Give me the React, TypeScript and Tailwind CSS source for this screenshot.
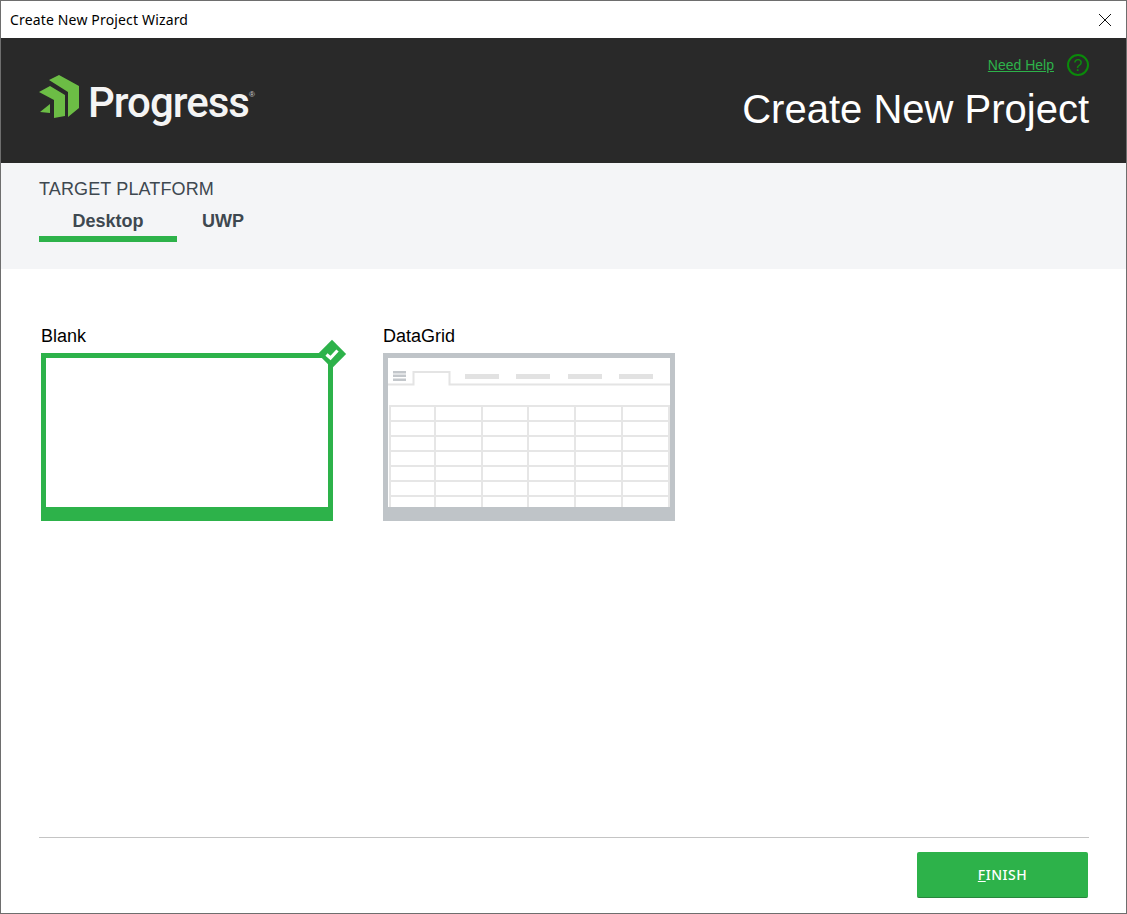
const green = '#2db24a'

function ProgressMark() {
  return (
    <svg width="42" height="46" viewBox="38 74 42 46" className="shrink-0">
      <polygon points="49,80 59,75 79,86 79,108 68,117 68,92" fill="#6cbd45" />
      <polygon points="39,92 50,86 65,95 65,116 54,118 54,100" fill="#6cbd45" />
      <polygon points="40,112 50,104 50,113" fill="#6cbd45" />
    </svg>
  )
}

function GridPreview() {
  const rows = [405, 420, 435, 450, 465, 480, 495]
  const cols = [389, 434, 481, 527, 574, 621, 668]
  const tabs = [465, 516, 568, 619]
  return (
    <svg width="292" height="168" viewBox="383 353 292 168" className="block">
      <rect x="383" y="353" width="292" height="168" fill="#bfc4c8" />
      <rect x="388" y="358" width="282" height="149" fill="#fff" />
      <rect x="393" y="371" width="13" height="2.500" fill="#c3c7cb" />
      <rect x="393" y="374.500" width="13" height="2.500" fill="#c3c7cb" />
      <rect x="393" y="378.500" width="13" height="2.500" fill="#c3c7cb" />
      <path d="M388 384.500H413.500V372H449.500V384.500H670" fill="none" stroke="#e4e4e4" strokeWidth="2" />
      {tabs.map((x) => (
        <rect key={x} x={x} y="374" width="34" height="5" fill="#e2e2e2" />
      ))}
      {rows.map((y) => (
        <rect key={y} x="389" y={y} width="280" height="2" fill="#e6e6e6" />
      ))}
      {cols.map((x) => (
        <rect key={x} x={x} y="405" width="2" height="102" fill="#e6e6e6" />
      ))}
    </svg>
  )
}

export default function App() {
  return (
    <div className="h-[914px] w-[1127px] flex flex-col bg-white border border-[#6e6e6e] font-['Liberation_Sans',sans-serif] overflow-hidden">
      {/* Title bar */}
      <div className="h-[37px] flex items-center justify-between pl-[9px] pr-[14px] shrink-0">
        <span className="text-[14px] text-black font-['Noto_Sans',sans-serif] tracking-[0.16px]">Create New Project Wizard</span>
        <svg width="14" height="14" viewBox="0 0 14 14">
          <path d="M1 1L13 13M13 1L1 13" stroke="#111" strokeWidth="1" fill="none" />
        </svg>
      </div>

      {/* Header */}
      <div className="h-[125px] bg-[#292929] flex justify-between pl-[37px] pr-[37px] shrink-0">
        <div className="flex items-start gap-[8px] pt-[36px]">
          <ProgressMark />
          <div className="flex items-start mt-[8px]">
            <span className="text-[42px] leading-none font-medium text-[#f4f4f4] font-['Roboto',sans-serif] tracking-[-1px]">Progress</span>
            <span className="text-[8px] text-[#cfcfcf] mt-[7px]">®</span>
          </div>
        </div>
        <div className="flex flex-col items-end pt-[15px]">
          <div className="flex items-center gap-[13px]">
            <a className="text-[14px] underline text-[#2db24a] mt-[2px]">Need Help</a>
            <svg width="22" height="22" viewBox="0 0 22 22">
              <circle cx="11" cy="11" r="10" fill="none" stroke="#0a8a0a" strokeWidth="2" />
              <text x="11" y="16.500" textAnchor="middle" fontSize="16" fill="#0a8a0a">?</text>
            </svg>
          </div>
          <h1 className="text-[40px] leading-none text-white mt-[13px]">Create New Project</h1>
        </div>
      </div>

      {/* Target platform */}
      <div className="h-[106px] bg-[#f4f5f7] pl-[38px] pt-[16px] shrink-0">
        <div className="text-[18px] leading-[20px] text-[#3e4850] tracking-[0.13px]">TARGET PLATFORM</div>
        <div className="flex mt-[7px] text-[#3e4850] font-bold text-[18px]">
          <div className="w-[138px] h-[36px] border-b-[6px] border-[#2db24a] flex justify-center pt-[5px] leading-[20px]">Desktop</div>
          <div className="pl-[25px] pt-[5px] leading-[20px]">UWP</div>
        </div>
      </div>

      {/* Templates */}
      <div className="flex-1 flex gap-[50px] pl-[40px] pt-[57px] text-black">
        <div>
          <div className="text-[18px] leading-[20px] mb-[7px]">Blank</div>
          <div className="relative w-[292px] h-[168px] border-[5px] border-b-[14px]" style={{ borderColor: green }}>
            <svg width="30" height="30" viewBox="0 0 30 30" className="absolute -top-[19px] -right-[19px]">
              <rect x="5" y="5" width="20" height="20" transform="rotate(45 15 15)" fill={green} />
              <path d="M9.500 15.500L13.500 19L20.500 11.500" fill="none" stroke="#fff" strokeWidth="3.200" />
            </svg>
          </div>
        </div>
        <div>
          <div className="text-[18px] leading-[20px] mb-[7px]">DataGrid</div>
          <GridPreview />
        </div>
      </div>

      {/* Footer */}
      <div className="ml-[38px] mr-[37px] h-[76px] border-t border-[#c4c4c4] flex justify-end items-start pt-[14px] pr-[1px] shrink-0">
        <button className="w-[171px] h-[46px] rounded-[2px] bg-[#2db24a] border-b border-[#27863c] text-white text-[14px] font-medium font-['Noto_Sans',sans-serif] tracking-[0.5px]">
          <span className="underline">F</span>INISH
        </button>
      </div>
    </div>
  )
}
